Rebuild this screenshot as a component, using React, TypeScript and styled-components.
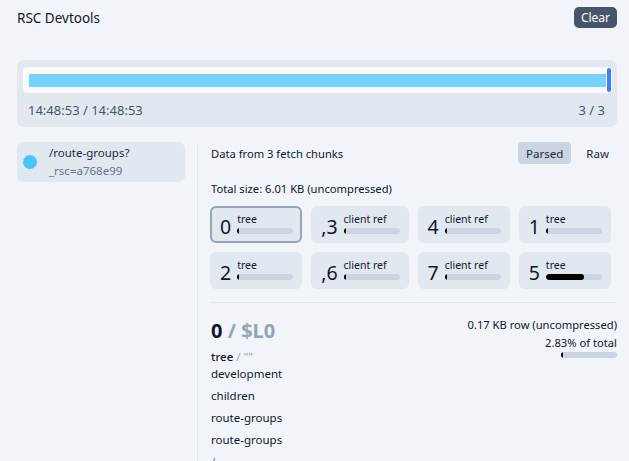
import React from "react";
import styled, { createGlobalStyle, css } from "styled-components";

const Global = createGlobalStyle`
  html, body { margin: 0; padding: 0; background: #f1f5f9; }
  body { font-family: "Noto Sans", "Open Sans", sans-serif; color: #0f172a; }
  * { box-sizing: border-box; }
`;

const Page = styled.div`
  padding: 7px 12px 0 17px;
  height: 461px;
  overflow: hidden;
`;

const Header = styled.header`
  display: flex;
  justify-content: space-between;
  align-items: center;
  height: 21px;
`;

const Title = styled.h1`
  margin: 0;
  font-size: 13.5px;
  font-weight: 400;
  color: #0f172a;
`;

const ClearButton = styled.button`
  font-family: inherit;
  font-size: 12px;
  color: #fff;
  background: #475569;
  border: none;
  border-radius: 5px;
  height: 21px;
  width: 43px;
  padding: 0;
`;

const Timeline = styled.section`
  margin-top: 32px;
  background: #e2e8f0;
  border-radius: 7px;
  padding: 7px 5px 0 6px;
  height: 67px;
`;

const Track = styled.div`
  position: relative;
  height: 26px;
  background: #f8fafc;
  border-radius: 4px;
  padding: 7px 6px 6px 6px;
`;

const Fill = styled.div`
  height: 13px;
  background: #74d2fd;
`;

const Thumb = styled.div`
  position: absolute;
  right: 1px;
  top: 1px;
  width: 4px;
  height: 24px;
  border-radius: 2px;
  background: #3b82f6;
`;

const TimelineFooter = styled.div`
  display: flex;
  justify-content: space-between;
  align-items: center;
  padding: 0 7px 0 5px;
  height: 34px;
  font-size: 13px;
  color: #475569;
`;

const Main = styled.div`
  display: flex;
  margin-top: 15px;
`;

const Sidebar = styled.aside`
  flex-shrink: 0;
  width: 181px;
  padding-right: 12px;
  border-right: 1px solid #e2e8f0;
  height: 320px;
`;

const RequestCard = styled.div`
  display: flex;
  align-items: center;
  gap: 12px;
  background: #e2e8f0;
  border-radius: 6px;
  padding: 2px 6px;
  height: 40px;
`;

const Dot = styled.span`
  width: 14px;
  height: 14px;
  border-radius: 50%;
  background: #45c6fc;
  flex-shrink: 0;
`;

const RequestText = styled.div`
  display: flex;
  flex-direction: column;
  font-size: 11.5px;
  line-height: 18px;
`;

const RequestPath = styled.span`
  color: #1e293b;
`;

const RequestQuery = styled.span`
  color: #64748b;
`;

const Content = styled.div`
  flex: 1;
  min-width: 0;
  padding-left: 12px;
`;

const TopRow = styled.div`
  display: flex;
  justify-content: space-between;
  align-items: center;
  height: 22px;
  font-size: 11.2px;
  padding-left: 1px;
`;

const Toggle = styled.div`
  display: flex;
  gap: 7px;
`;

const ToggleButton = styled.button<{ $active?: boolean }>`
  font-family: inherit;
  font-size: 11.5px;
  color: #1e293b;
  border: none;
  border-radius: 4px;
  height: 22px;
  padding: 0 8px;
  background: ${(p) => (p.$active ? "#cbd5e1" : "transparent")};
`;

const TotalSize = styled.div`
  margin-top: 17px;
  font-size: 11.2px;
  line-height: 16px;
  padding-left: 1px;
`;

const ChipGrid = styled.div`
  margin-top: 9px;
  display: grid;
  grid-template-columns: repeat(4, max-content);
  gap: 9px;
`;

const Chip = styled.div<{ $selected?: boolean }>`
  display: flex;
  align-items: center;
  gap: 6px;
  height: 37px;
  background: #e2e8f0;
  border-radius: 6px;
  padding: 0 7px 0 8px;
  border: 2px solid transparent;
  ${(p) =>
    p.$selected &&
    css`
      border-color: #94a3b8;
    `}
`;

const ChipNumber = styled.span`
  font-size: 19.5px;
  line-height: 20px;
  color: #0f172a;
  margin-top: 4px;
`;

const ChipBody = styled.div`
  display: flex;
  flex-direction: column;
  gap: 2px;
  margin-top: -4px;
`;

const ChipLabel = styled.span`
  font-size: 10.5px;
  line-height: 14px;
`;

const Bar = styled.div<{ $w?: number }>`
  width: ${(p) => p.$w ?? 56}px;
  height: 6px;
  border-radius: 3px;
  background: #cbd5e1;
  overflow: hidden;
`;

const BarFill = styled.div`
  height: 100%;
  min-width: 2px;
  border-radius: 3px;
  background: #000;
`;

const Divider = styled.hr`
  border: none;
  border-top: 1px solid #e2e8f0;
  margin: 13px 0 0 0;
`;

const Detail = styled.div`
  display: flex;
  justify-content: space-between;
  margin-top: 14px;
`;

const DetailLeft = styled.div`
  display: flex;
  flex-direction: column;
  padding-left: 1px;
`;

const DetailTitle = styled.div`
  font-size: 20px;
  font-weight: 700;
  line-height: 27px;
`;

const Muted = styled.span`
  color: #94a3b8;
`;

const TypeLine = styled.div`
  margin-top: 5px;
  font-size: 11.5px;
  line-height: 16px;
`;

const TypeName = styled.span`
  font-weight: 500;
`;

const ValueList = styled.ul`
  list-style: none;
  margin: 0;
  padding: 0;
  display: flex;
  flex-direction: column;
  gap: 2px;
`;

const ValueItem = styled.li<{ $link?: boolean }>`
  font-size: 11.5px;
  line-height: 20px;
  color: ${(p) => (p.$link ? "#3b82f6" : "#0f172a")};
  &:first-child { margin-top: -1px; }
`;

const DetailRight = styled.div`
  display: flex;
  flex-direction: column;
  align-items: flex-end;
  font-size: 11.2px;
  line-height: 18px;
  margin-top: -1px;
`;

const chips = [
  { n: "0", label: "tree", pct: 3, selected: true },
  { n: ",3", label: "client ref", pct: 3 },
  { n: "4", label: "client ref", pct: 3 },
  { n: "1", label: "tree", pct: 3 },
  { n: "2", label: "tree", pct: 4 },
  { n: ",6", label: "client ref", pct: 2 },
  { n: "7", label: "client ref", pct: 2 },
  { n: "5", label: "tree", pct: 68 },
];

export default function App() {
  return (
    <>
      <Global />
      <Page>
        <Header>
          <Title>RSC Devtools</Title>
          <ClearButton>Clear</ClearButton>
        </Header>
        <Timeline>
          <Track>
            <Fill />
            <Thumb />
          </Track>
          <TimelineFooter>
            <span>14:48:53 / 14:48:53</span>
            <span>3 / 3</span>
          </TimelineFooter>
        </Timeline>
        <Main>
          <Sidebar>
            <RequestCard>
              <Dot />
              <RequestText>
                <RequestPath>/route-groups?</RequestPath>
                <RequestQuery>_rsc=a768e99</RequestQuery>
              </RequestText>
            </RequestCard>
          </Sidebar>
          <Content>
            <TopRow>
              <span>Data from 3 fetch chunks</span>
              <Toggle>
                <ToggleButton $active>Parsed</ToggleButton>
                <ToggleButton>Raw</ToggleButton>
              </Toggle>
            </TopRow>
            <TotalSize>Total size: 6.01 KB (uncompressed)</TotalSize>
            <ChipGrid>
              {chips.map((c, i) => (
                <Chip key={i} $selected={c.selected}>
                  <ChipNumber>{c.n}</ChipNumber>
                  <ChipBody>
                    <ChipLabel>{c.label}</ChipLabel>
                    <Bar>
                      <BarFill style={{ width: `${c.pct}%` }} />
                    </Bar>
                  </ChipBody>
                </Chip>
              ))}
            </ChipGrid>
            <Divider />
            <Detail>
              <DetailLeft>
                <DetailTitle>
                  0 <Muted>/ $L0</Muted>
                </DetailTitle>
                <TypeLine>
                  <TypeName>tree</TypeName> <Muted>/ ""</Muted>
                </TypeLine>
                <ValueList>
                  <ValueItem>development</ValueItem>
                  <ValueItem>children</ValueItem>
                  <ValueItem>route-groups</ValueItem>
                  <ValueItem>route-groups</ValueItem>
                  <ValueItem $link>/</ValueItem>
                </ValueList>
              </DetailLeft>
              <DetailRight>
                <span>0.17 KB row (uncompressed)</span>
                <span>2.83% of total</span>
                <Bar $w={56}>
                  <BarFill style={{ width: "3%" }} />
                </Bar>
              </DetailRight>
            </Detail>
          </Content>
        </Main>
      </Page>
    </>
  );
}
